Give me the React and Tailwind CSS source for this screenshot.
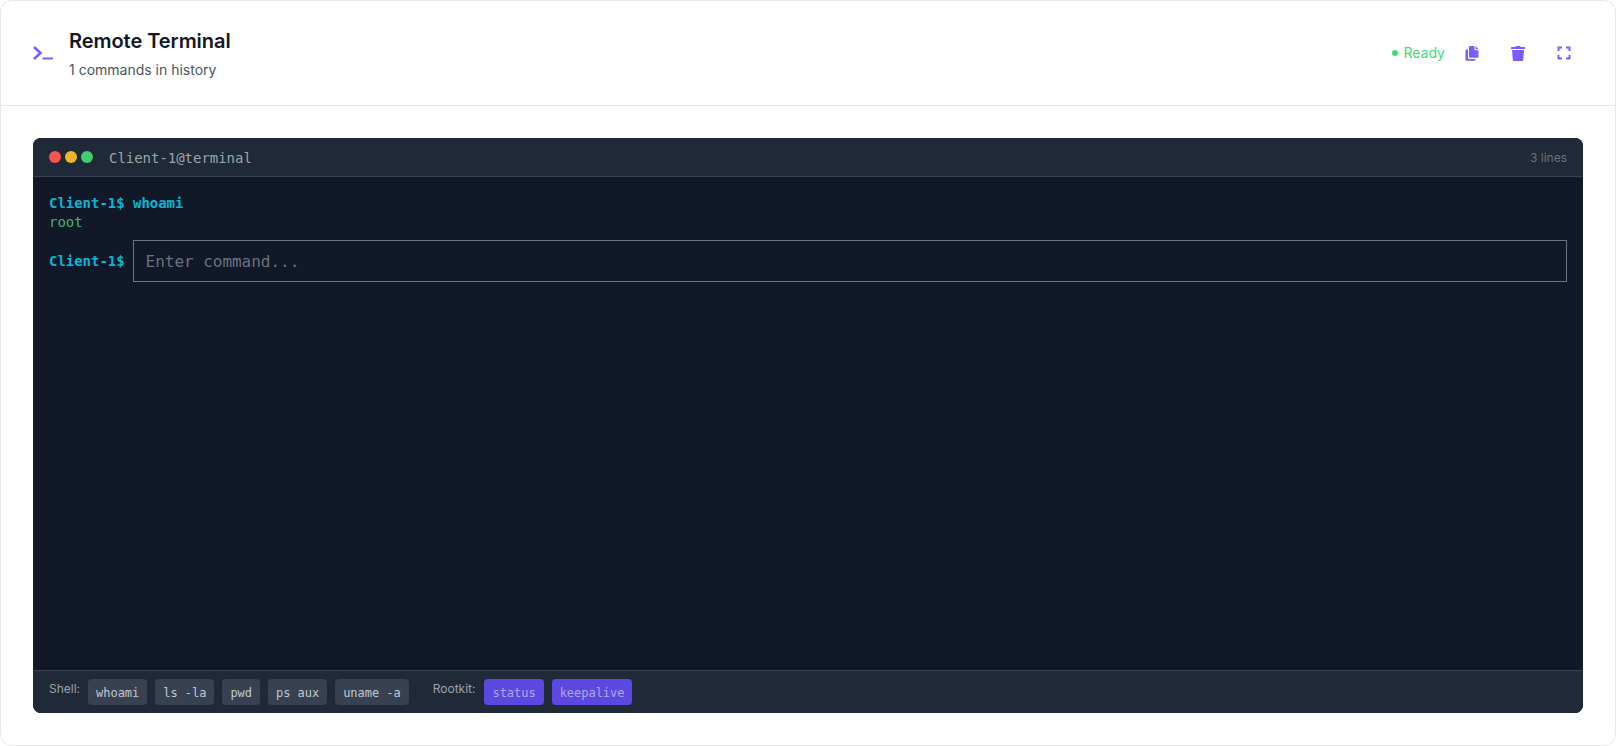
import React from "react";

const mono = "font-['DejaVu_Sans_Mono','Liberation_Mono',monospace] tracking-[-0.03px]";

function Chip({ children, purple }) {
  return (
    <button className={`h-[26px] px-2 pt-px rounded text-xs ${mono} ${purple ? "bg-[#5b48e0] text-[#b0a6f2]" : "bg-[#374151] text-[#c3c8d0]"}`}>
      {children}
    </button>
  );
}

function IconButton({ children }) {
  return <button className="w-8 h-8 flex items-center justify-center text-[#7c5cff]">{children}</button>;
}

export default function App() {
  return (
    <div className="h-[746px] bg-white font-['Inter',sans-serif] flex flex-col border border-[#e5e7eb] rounded-xl">
      <div className="h-[105px] shrink-0 border-b border-[#e5e7eb] pl-8 pr-[35px] flex items-center justify-between">
        <div className="flex items-center gap-3">
          <svg width="24" height="24" viewBox="0 0 24 24" fill="none" stroke="#7c5cff">
            <path d="M1 6 7.5 12 1 18" strokeWidth="2.5" />
            <path d="M9.5 17.5H20" strokeWidth="2" />
          </svg>
          <div className="pt-px">
            <div className="text-xl font-semibold leading-7 tracking-[-0.05px] text-[#111827]">Remote Terminal</div>
            <div className="text-sm leading-5 mt-[5px] text-[#4b5563]">1 commands in history</div>
          </div>
        </div>
        <div className="flex items-center">
          <span className="text-sm text-[#3ddc78] flex items-center gap-[6px]">
            <span className="w-[6px] h-[6px] rounded-full bg-[#3ddc78]" />
            Ready
          </span>
          <div className="flex items-center gap-[14px] ml-[11px]">
            <IconButton>
              <svg width="14" height="15" viewBox="0 0 14 15" fill="currentColor">
                <path d="M5 0H9.5V3.5a.8.8 0 0 0 .8.8H13.5V10.8a1 1 0 0 1-1 1H5a1 1 0 0 1-1-1V1a1 1 0 0 1 1-1Z" />
                <path d="M10.5 0 13.5 3.3H10.5Z" />
                <path d="M1.5 3.5H3V11.5a1.5 1.5 0 0 0 1.5 1.5H10.5V13.8a1 1 0 0 1-1 1H1.5a1 1 0 0 1-1-1V4.5a1 1 0 0 1 1-1Z" />
              </svg>
            </IconButton>
            <IconButton>
              <svg width="14" height="15" viewBox="0 0 14 15" fill="currentColor">
                <path d="M5 0H9L9.6 1H13.4a.6.6 0 0 1 .6.6V3H0V1.6A.6.6 0 0 1 .6 1H4.4Z" />
                <path d="M1 4H13L12.2 13.8a1.2 1.2 0 0 1-1.2 1.2H3a1.2 1.2 0 0 1-1.2-1.2Z" />
              </svg>
            </IconButton>
            <IconButton>
              <svg width="14" height="14" viewBox="0 0 14 14" fill="none" stroke="currentColor" strokeWidth="2">
                <path d="M1.5 5V1.5H5M9 1.5H12.5V5M12.5 9V12.5H9M5 12.5H1.5V9" />
              </svg>
            </IconButton>
          </div>
        </div>
      </div>
      <div className="flex-1 p-8 flex flex-col">
        <div className="flex-1 rounded-lg overflow-hidden bg-[#111827] flex flex-col">
          <div className="h-[39px] shrink-0 bg-[#1f2937] border-b border-[#374151] px-4 pt-[2px] flex items-center justify-between">
            <div className="flex items-center">
              <div className="flex gap-1 -mt-[2px]">
                <span className="w-3 h-3 rounded-full bg-[#f85252]" />
                <span className="w-3 h-3 rounded-full bg-[#f0b429]" />
                <span className="w-3 h-3 rounded-full bg-[#3fcf6d]" />
              </div>
              <span className={`ml-4 text-sm text-[#9ca3af] ${mono}`}>Client-1@terminal</span>
            </div>
            <span className="text-xs text-[#6b7280]">3 lines</span>
          </div>
          <div className={`flex-1 pt-[17px] px-4 text-sm leading-[19px] ${mono}`}>
            <div className="font-bold text-[#06b6d4]">Client-1$ whoami</div>
            <div className="text-[#3fb56f]">root</div>
            <div className="flex items-center gap-2 mt-2">
              <span className="font-bold text-[#06b6d4]">Client-1$</span>
              <input
                placeholder="Enter command..."
                className={`flex-1 h-[42px] px-3 bg-transparent border border-[#6b7280] text-base placeholder:text-[#6b7280] ${mono}`}
              />
            </div>
          </div>
          <div className="h-[43px] shrink-0 bg-[#1f2937] border-t border-[#374151] px-4 flex items-center gap-2">
            <span className="text-xs text-[#9ca3af] -mt-[7px]">Shell:</span>
            <Chip>whoami</Chip>
            <Chip>ls -la</Chip>
            <Chip>pwd</Chip>
            <Chip>ps aux</Chip>
            <Chip>uname -a</Chip>
            <span className="text-xs text-[#9ca3af] -mt-[7px] ml-[16px] mr-px">Rootkit:</span>
            <Chip purple>status</Chip>
            <Chip purple>keepalive</Chip>
          </div>
        </div>
      </div>
    </div>
  );
}
